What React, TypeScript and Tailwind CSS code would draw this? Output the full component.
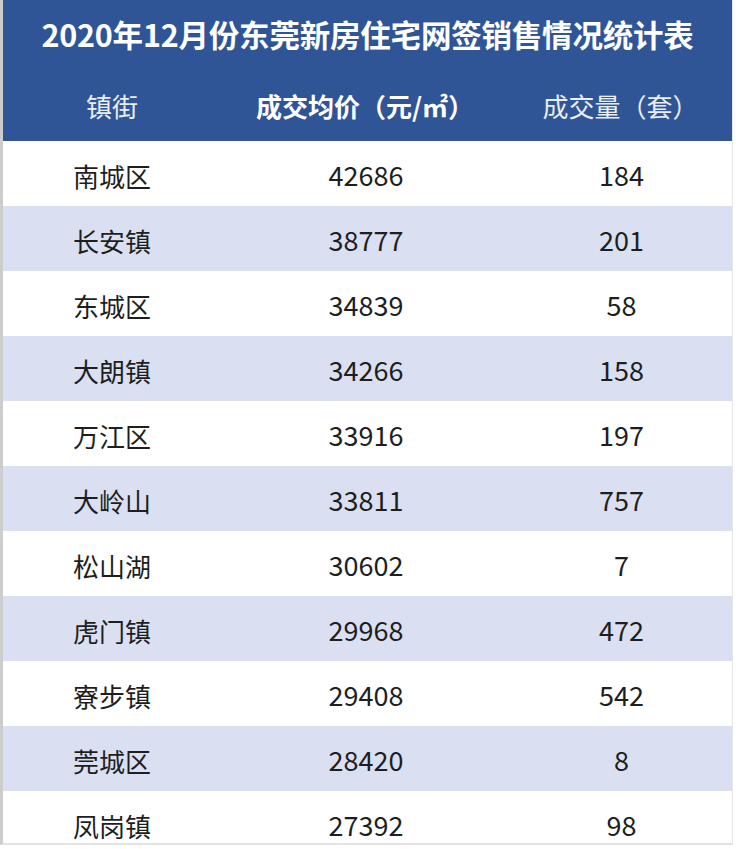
import React from "react";

const rows: [string, string, string][] = [
  ["南城区", "42686", "184"],
  ["长安镇", "38777", "201"],
  ["东城区", "34839", "58"],
  ["大朗镇", "34266", "158"],
  ["万江区", "33916", "197"],
  ["大岭山", "33811", "757"],
  ["松山湖", "30602", "7"],
  ["虎门镇", "29968", "472"],
  ["寮步镇", "29408", "542"],
  ["莞城区", "28420", "8"],
  ["凤岗镇", "27392", "98"],
];

const font = { fontFamily: '"Noto Sans CJK SC", "Noto Sans", sans-serif' };

export default function App() {
  return (
    <div className="w-[736px] h-[849px] bg-white" style={font}>
      <div className="w-[733px] h-[845px] overflow-hidden border-l-[3px] border-r border-b-2 border-l-[#cdcdcd] border-r-[#e6e6e6] border-b-[#e2e2e2]">
        {/* header */}
        <div className="h-[141px] bg-[#2f5597] text-white">
          <div className="h-[70px] flex items-center justify-center text-[30.5px] font-bold tracking-[-0.2px]">
            2020年12月份东莞新房住宅网签销售情况统计表
          </div>
          <div className="h-[71px] grid grid-cols-[218px_288px_1fr] items-center text-[26px]">
            <div className="text-center text-white/90">镇街</div>
            <div className="text-center font-bold">成交均价（元/㎡）</div>
            <div className="text-center text-white/90">成交量（套）</div>
          </div>
        </div>

        {/* body */}
        {rows.map(([town, price, count], i) => (
          <div
            key={town}
            className={
              "h-[65px] grid grid-cols-[218px_290px_1fr] items-center pt-1 text-[26px] text-[#1e1e1e] " +
              (i % 2 === 1 ? "bg-[#dae0f1]" : "bg-white")
            }
          >
            <div className="text-center">{town}</div>
            <div className="text-center text-[27px]">{price}</div>
            <div className="text-center text-[27px]">{count}</div>
          </div>
        ))}
      </div>
    </div>
  );
}
